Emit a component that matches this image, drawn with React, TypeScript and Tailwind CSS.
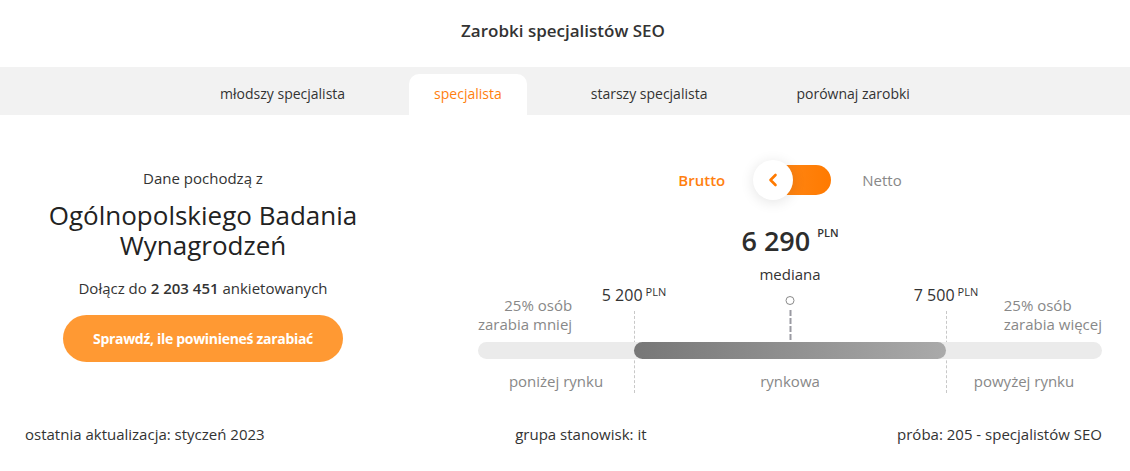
import React from "react";

const sans = "font-['Open_Sans',sans-serif]";

const tabs = [
  { label: "młodszy specjalista", active: false },
  { label: "specjalista", active: true },
  { label: "starszy specjalista", active: false },
  { label: "porównaj zarobki", active: false },
];

function Tabs() {
  return (
    <div className="flex h-[48px] items-end justify-center bg-[#f2f2f2]">
      <div className="flex items-end gap-[39px]">
        {tabs.map((t) => (
          <div
            key={t.label}
            className={`flex h-[41px] items-center justify-center rounded-t-[10px] px-[25px] pb-[2px] text-[14px] ${
              t.active ? "bg-white text-[#ff7f0f]" : "text-[#333]"
            }`}
          >
            {t.label}
          </div>
        ))}
      </div>
    </div>
  );
}

function Toggle() {
  return (
    <div className="flex h-[40px] items-center justify-center">
      <span className="text-[15px] font-semibold text-[#ff7f0f]">Brutto</span>
      <div className="relative ml-[28px] mr-[31px] flex h-[40px] w-[78px] items-center">
        <div className="ml-[2px] h-[30px] w-[76px] rounded-full bg-gradient-to-r from-[#ff8c1a] to-[#ff7a00]" />
        <div className="absolute left-0 top-0 flex h-[40px] w-[40px] items-center justify-center rounded-full bg-white shadow-[0_2px_14px_rgba(0,0,0,0.11)]">
          <svg width="12" height="14" viewBox="0 0 12 14" fill="none">
            <path d="M8.5 2 L3.5 7 L8.5 12" stroke="#ff7a00" strokeWidth="2.6" strokeLinecap="round" strokeLinejoin="round" />
          </svg>
        </div>
      </div>
      <span className="text-[15px] text-[#888]">Netto</span>
    </div>
  );
}

function Chart() {
  return (
    <div className="relative w-[624px]">
      {/* value markers on the quartile boundaries */}
      <div className="absolute left-1/4 top-0 -translate-x-1/2 whitespace-nowrap text-[16px] leading-[22px] text-[#333]">
        5 200<sup className="ml-[3px] text-[11px]">PLN</sup>
      </div>
      <div className="absolute left-3/4 top-0 -translate-x-1/2 whitespace-nowrap text-[16px] leading-[22px] text-[#333]">
        7 500<sup className="ml-[3px] text-[11px]">PLN</sup>
      </div>
      {/* quartile guide lines */}
      <div className="absolute left-1/4 top-[27px] h-[82px] border-l border-dashed border-[#c8c8c8]" />
      <div className="absolute left-3/4 top-[27px] h-[82px] border-l border-dashed border-[#c8c8c8]" />
      {/* median marker */}
      <div className="absolute left-1/2 top-[12px] flex -translate-x-1/2 flex-col items-center">
        <div className="h-[9px] w-[9px] rounded-full border border-[#8a8a8a] bg-white" />
        <div className="mt-[5px] h-[30px] border-l-2 border-dashed border-[#9a9aa2]" />
      </div>

      <div className="flex items-end justify-between pt-[12px] text-[15px] leading-[19px] text-[#888]">
        <div className="text-right">
          25% osób
          <br />
          zarabia mniej
        </div>
        <div className="text-left">
          25% osób
          <br />
          zarabia więcej
        </div>
      </div>

      <div className="relative mt-[8px] h-[17px] rounded-full bg-[#ebebeb]">
        <div className="absolute left-1/4 top-0 h-full w-1/2 rounded-full bg-gradient-to-r from-[#777777] to-[#aaaaaa]" />
      </div>

      <div className="mt-[12px] grid grid-cols-[1fr_2fr_1fr] text-center text-[15px] leading-[20px] text-[#888]">
        <div>poniżej rynku</div>
        <div>rynkowa</div>
        <div>powyżej rynku</div>
      </div>
    </div>
  );
}

export default function App() {
  return (
    <div className={`w-[1130px] bg-white text-[#333] ${sans}`}>
      <div className="flex h-[67px] items-center justify-center pb-[6px] pr-[4px]">
        <h1 className="text-[17px] font-semibold text-[#333]">Zarobki specjalistów SEO</h1>
      </div>
      <Tabs />

      <div className="flex pt-[45px]">
        <div className="flex w-[406px] flex-col items-center pt-[8px] text-center">
          <p className="text-[15px] leading-[20px] text-[#333]">Dane pochodzą z</p>
          <h2 className="mt-[12px] text-[26px] leading-[30px] text-[#222]">
            Ogólnopolskiego Badania
            <br />
            Wynagrodzeń
          </h2>
          <p className="mt-[18px] text-[15px] leading-[20px] text-[#333]">
            Dołącz do <span className="font-semibold">2 203 451</span> ankietowanych
          </p>
          <button className="mt-[17px] h-[47px] w-[280px] rounded-full bg-[#ff9933] text-[14px] font-bold tracking-[-0.3px] text-white">
            Sprawdź, ile powinieneś zarabiać
          </button>
        </div>

        <div className="ml-[72px] flex w-[624px] flex-col items-center">
          <Toggle />
          <div className="mt-[24px] flex items-start">
            <span className="text-[27px] font-semibold leading-[34px] text-[#2d2d2d]">6 290</span>
            <span className="ml-[7px] mt-[1px] text-[11px] font-semibold text-[#333]">PLN</span>
          </div>
          <div className="mt-[6px] text-[15px] leading-[20px] text-[#333]">mediana</div>
          <Chart />
        </div>
      </div>

      <div className="flex justify-between pb-[25px] pl-[25px] pr-[28px] pt-[33px] text-[15px] leading-[20px] text-[#333]">
        <span>ostatnia aktualizacja: styczeń 2023</span>
        <span>grupa stanowisk: it</span>
        <span>próba: 205 - specjalistów SEO</span>
      </div>
    </div>
  );
}
